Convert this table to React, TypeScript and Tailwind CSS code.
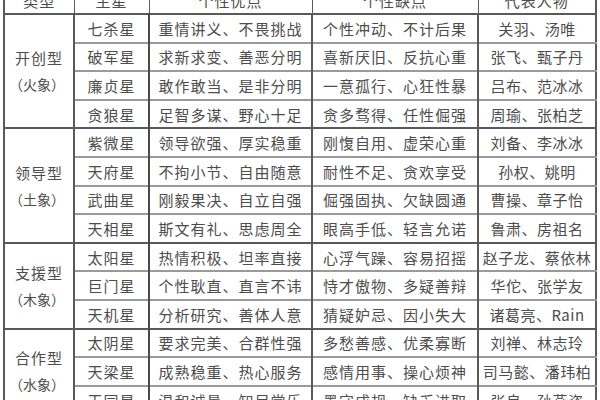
const groups = [
  {
    type: '开创型',
    element: '（火象）',
    rows: [
      ['七杀星', '重情讲义、不畏挑战', '个性冲动、不计后果', '关羽、汤唯'],
      ['破军星', '求新求变、善恶分明', '喜新厌旧、反抗心重', '张飞、甄子丹'],
      ['廉贞星', '敢作敢当、是非分明', '一意孤行、心狂性暴', '吕布、范冰冰'],
      ['贪狼星', '足智多谋、野心十足', '贪多骛得、任性倔强', '周瑜、张柏芝'],
    ],
  },
  {
    type: '领导型',
    element: '（土象）',
    rows: [
      ['紫微星', '领导欲强、厚实稳重', '刚愎自用、虚荣心重', '刘备、李冰冰'],
      ['天府星', '不拘小节、自由随意', '耐性不足、贪欢享受', '孙权、姚明'],
      ['武曲星', '刚毅果决、自立自强', '倔强固执、欠缺圆通', '曹操、章子怡'],
      ['天相星', '斯文有礼、思虑周全', '眼高手低、轻言允诺', '鲁肃、房祖名'],
    ],
  },
  {
    type: '支援型',
    element: '（木象）',
    rows: [
      ['太阳星', '热情积极、坦率直接', '心浮气躁、容易招摇', '赵子龙、蔡依林'],
      ['巨门星', '个性耿直、直言不讳', '恃才傲物、多疑善辩', '华佗、张学友'],
      ['天机星', '分析研究、善体人意', '猜疑妒忌、因小失大', '诸葛亮、Rain'],
    ],
  },
  {
    type: '合作型',
    element: '（水象）',
    rows: [
      ['太阴星', '要求完美、合群性强', '多愁善感、优柔寡断', '刘禅、林志玲'],
      ['天梁星', '成熟稳重、热心服务', '感情用事、操心烦神', '司马懿、潘玮柏'],
      ['天同星', '温和诚恳、知足常乐', '墨守成规、缺乏进取', '张良、孙燕姿'],
    ],
  },
]

const headers = ['类型', '主星', '个性优点', '个性缺点', '代表人物']

export default function App() {
  return (
    <div
      className="w-[600px] h-[400px] overflow-hidden bg-white text-[#4d4d4d] text-[15px] leading-none"
      style={{ fontFamily: '"Noto Sans CJK SC", "Noto Sans", sans-serif' }}
    >
      {/* header row is cut at the top in the screenshot */}
      <table className="ml-[3px] -mt-[15px] border-collapse table-fixed w-[592px] border-2 border-[#5a5a5a]">
        <colgroup>
          <col className="w-[70px]" />
          <col className="w-[75px]" />
          <col className="w-[163px]" />
          <col className="w-[166px]" />
          <col className="w-[118px]" />
        </colgroup>
        <thead>
          <tr className="h-[28px] border-b-2 border-[#5a5a5a]">
            {headers.map((h) => (
              <th key={h} className="font-normal text-center border-x border-[#5a5a5a] tracking-[1px]">
                {h}
              </th>
            ))}
          </tr>
        </thead>
        <tbody>
          {groups.map((g) =>
            g.rows.map((r, i) => (
              <tr
                key={r[0]}
                className={`h-[28.6px] ${
                  i === g.rows.length - 1 ? 'border-b-2 border-[#5a5a5a]' : 'border-b-2 border-[#9a9a9a]'
                }`}
              >
                {i === 0 && (
                  <td
                    rowSpan={g.rows.length}
                    className="text-center align-middle border-r-2 border-[#5a5a5a] border-b-2 leading-[27px]"
                  >
                    <div className="tracking-[1px]">{g.type}</div>
                    <div className="text-[14px] -ml-[4px]">{g.element}</div>
                  </td>
                )}
                <td className="text-center border-r-2 border-[#4a4a4a] tracking-[1px]">{r[0]}</td>
                <td className="text-center border-r-2 border-[#5a5a5a] tracking-[1px]">{r[1]}</td>
                <td className="text-center border-r-2 border-[#5a5a5a] tracking-[1px]">{r[2]}</td>
                <td className="text-center tracking-[0.5px]">{r[3]}</td>
              </tr>
            ))
          )}
        </tbody>
      </table>
    </div>
  )
}
